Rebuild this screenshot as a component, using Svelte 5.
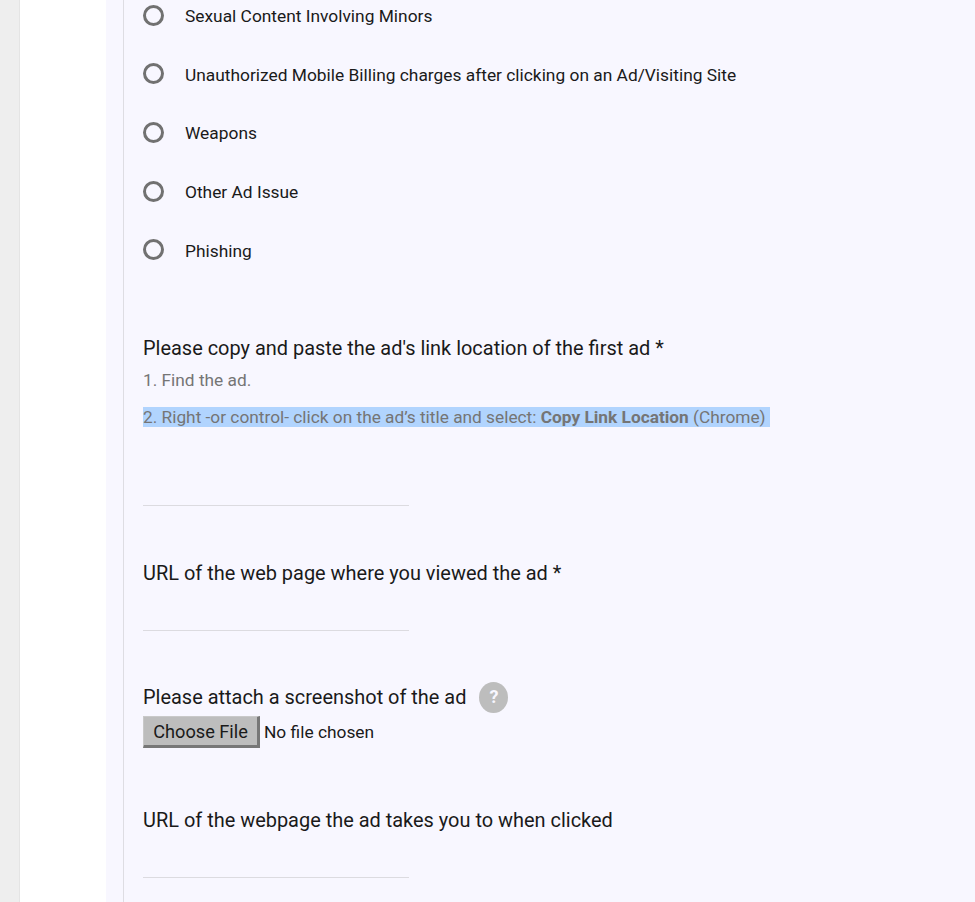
<script>
	const options = [
		"Sexual Content Involving Minors",
		"Unauthorized Mobile Billing charges after clicking on an Ad/Visiting Site",
		"Weapons",
		"Other Ad Issue",
		"Phishing"
	];
</script>

<div class="page">
	<div class="sheet">
		<div class="form">
			<div class="options">
				{#each options as option}
					<label class="option">
						<span class="radio"></span>
						<span class="text">{option}</span>
					</label>
				{/each}
			</div>

			<div class="question first">
				<div class="title">Please copy and paste the ad's link location of the first ad *</div>
				<div class="help">1. Find the ad.</div>
				<div class="help second"><span class="selected">2. Right -or control- click on the ad’s title and select: <b>Copy Link Location</b> (Chrome) </span></div>
				<div class="line link"></div>
			</div>

			<div class="question url">
				<div class="title">URL of the web page where you viewed the ad *</div>
				<div class="line"></div>
			</div>

			<div class="question attach">
				<div class="title with-icon">
					Please attach a screenshot of the ad
					<span class="hint">?</span>
				</div>
				<div class="file">
					<button class="choose">Choose File</button>
					<span>No file chosen</span>
				</div>
			</div>

			<div class="question last">
				<div class="title">URL of the webpage the ad takes you to when clicked</div>
				<div class="line"></div>
			</div>
		</div>
	</div>
</div>

<style>
	:global(body) {
		margin: 0;
		background: #eeeeee;
	}

	.page {
		height: 902px;
		overflow: hidden;
		padding-left: 20px;
		font-family: Roboto, "Liberation Sans", sans-serif;
		color: #1a1a1a;
	}

	.sheet {
		height: 100%;
		background: #ffffff;
		padding-left: 86px;
		border-left: 1px solid #e4e4e4;
		margin-left: -1px;
	}

	.form {
		height: 100%;
		overflow: hidden;
		background: #f8f7ff;
		margin-left: 17px;
		box-shadow: -17px 0 0 #f8f7ff;
		border-left: 1px solid #dedde3;
		padding-left: 19px;
	}

	.options {
		display: flex;
		flex-direction: column;
		margin-top: -14px;
	}

	.option {
		display: flex;
		align-items: center;
		gap: 21px;
		height: 58.6px;
		font-size: 17.35px;
	}

	.text {
		position: relative;
		top: 1px;
	}

	.radio {
		box-sizing: border-box;
		width: 21px;
		height: 21px;
		border: 3px solid #717171;
		border-radius: 50%;
	}

	.question {
		display: flex;
		flex-direction: column;
	}

	.first {
		margin-top: 56.5px;
	}

	.title {
		font-size: 19.95px;
		line-height: 26px;
	}

	.help {
		font-size: 17.3px;
		line-height: 21px;
		color: #757575;
		margin-top: 9px;
	}

	.help.second {
		margin-top: 16px;
	}

	.selected {
		background: #b1d4fe;
		padding: 0 4px 0 0;
	}

	.line {
		width: 266px;
		height: 1px;
		background: #dcdbe0;
		margin-top: 44px;
	}

	.line.link {
		margin-top: 77px;
	}

	.url {
		margin-top: 54px;
	}

	.attach {
		margin-top: 51px;
	}

	.with-icon {
		display: flex;
		align-items: center;
		gap: 13px;
		height: 30px;
	}

	.hint {
		display: flex;
		align-items: center;
		justify-content: center;
		width: 29px;
		height: 31px;
		border-radius: 50%;
		background: #bdbdbd;
		color: #f8f7ff;
		font-size: 18px;
		font-weight: 700;
	}

	.file {
		display: flex;
		align-items: center;
		gap: 4px;
		font-size: 17.35px;
		margin-top: 4px;
	}

	.choose {
		box-sizing: border-box;
		width: 117px;
		height: 32px;
		padding: 0;
		background: #bdbdbd;
		border: 1px solid #c9c9c9;
		border-right: 3px solid #777;
		border-bottom: 3px solid #777;
		font: inherit;
		font-size: 18.2px;
		color: #1a1a1a;
	}

	.last {
		margin-top: 59px;
	}
</style>
